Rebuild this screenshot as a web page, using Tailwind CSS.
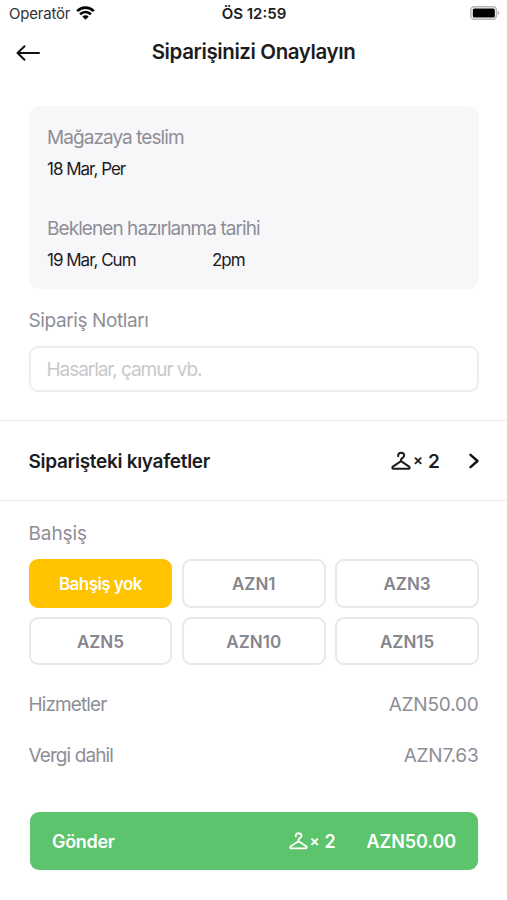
<!DOCTYPE html>
<html lang="tr">
<head>
<meta charset="utf-8">
<meta name="viewport" content="width=device-width, initial-scale=1">
<title>Siparişinizi Onaylayın</title>
<script src="https://cdn.jsdelivr.net/npm/@tailwindcss/browser@4"></script>
</head>
<body class="bg-white">
<svg class="hidden">
  <symbol id="hanger" viewBox="0 0 20 20">
    <path d="M7.2 5.2C6.8 3.2 8.2 1.8 10 1.8s3.2 1.2 3.2 2.8c0 2.2-3 2.2-3.2 4.2v1.2M10 10.2L1.9 15.6c-1 .8-.6 2.2.6 2.2h15c1.2 0 1.6-1.4.6-2.2L10 10.2" fill="none" stroke="currentColor" stroke-width="2" stroke-linecap="round" stroke-linejoin="round"/>
  </symbol>
</svg>
<div class="w-[507px] h-[900px] flex flex-col overflow-hidden bg-white font-['Inter',sans-serif] text-[#1c1c1e] whitespace-nowrap">
  <header class="h-[106px] shrink-0">
    <div class="h-7 grid grid-cols-3 items-center pl-[9px] pr-[7px]">
      <div class="flex items-center gap-[6px]">
        <span class="text-[15px] tracking-[-0.2px] text-[#333]">Operatör</span>
        <svg class="w-[19px] h-[14px] -mt-0.5" viewBox="0 0 19 14" fill="none" stroke="#000" stroke-width="2.7"><path d="M1.2 5.1a11.8 11.8 0 0 1 16.6 0M4.1 8.2a7.7 7.7 0 0 1 10.8 0"/><path d="M6.3 10.5a4.5 4.5 0 0 1 6.4 0L9.5 13.8Z" fill="#000" stroke="none"/></svg>
      </div>
      <span class="text-center text-[15px] font-semibold pr-[1px]">ÖS 12:59</span>
      <svg class="justify-self-end w-[30px] h-[14px] -mt-0.5" viewBox="0 0 30 14"><rect x=".8" y=".8" width="25.6" height="12.4" rx="3.4" fill="#fff" stroke="#b5b5b5" stroke-width="1.5"/><rect x="2.8" y="2.6" width="22" height="8.8" rx="1.5" fill="#000"/><path d="M27.8 4.8c2 .8 2 3.6 0 4.4Z" fill="#aaa"/></svg>
    </div>
    <div class="h-[50px] grid grid-cols-[80px_1fr_80px] items-center">
      <svg class="ml-[16px] w-[26px] h-[18px]" viewBox="0 0 26 18" fill="none" stroke="#111" stroke-width="2" stroke-linecap="round" stroke-linejoin="round"><path d="M23 9H2M8.5 2.2L1.5 9l7 6.8"/></svg>
      <h1 class="text-center text-[20.5px] font-semibold tracking-[-0.4px] -mt-[2px]">Siparişinizi Onaylayın</h1>
    </div>
  </header>
  <section class="mx-[28.5px] h-[183px] w-[450.5px] shrink-0 rounded-[11px] bg-[#f7f7fa] px-[18.5px] pt-[19px]">
    <p class="text-[19px] leading-[26px] tracking-[-0.93px] text-[#8e8e96]">Mağazaya teslim</p>
    <p class="mt-[6px] text-[17px] leading-6 tracking-[-1px]">18 Mar, Per</p>
    <p class="mt-[35px] text-[19px] leading-[26px] tracking-[-0.93px] text-[#8e8e96]">Beklenen hazırlanma tarihi</p>
    <div class="mt-[6px] flex text-[17px] leading-6 tracking-[-1px]"><span class="w-[165px]">19 Mar, Cum</span><span>2pm</span></div>
  </section>
  <section class="h-[131px] shrink-0 px-[28.5px] pt-[19px]">
    <p class="text-[19px] leading-[26px] tracking-[-0.4px] text-[#8e8e96]">Sipariş Notları</p>
    <div class="mt-[12px] w-[450.5px] h-[46px] rounded-[9px] border-2 border-[#ededee] flex items-center px-[16px] pt-[3px] text-[19px] tracking-[-1.05px] text-[#c8c8cb]">Hasarlar, çamur vb.</div>
  </section>
  <section class="h-[81px] shrink-0 border-y border-[#eeeeef] flex items-center pl-[28.5px] pr-[25px]">
    <h2 class="flex-1 text-[19px] font-semibold tracking-[-0.3px] pt-[3px]">Siparişteki kıyafetler</h2>
    <svg class="w-5 h-5 mr-px"><use href="#hanger"/></svg>
    <span class="ml-[1px] w-[13px] text-[15px] font-semibold">×</span>
    <span class="ml-[2px] text-[19px] font-semibold w-[13px] pt-[3px]">2</span>
    <svg class="ml-[26px] mr-px w-[14px] h-[16px]" viewBox="0 0 14 16" fill="none" stroke="#111" stroke-width="2.4" stroke-linecap="round" stroke-linejoin="round"><path d="M3.5 1.8L10.5 8l-7 6.2"/></svg>
  </section>
  <section class="h-[178px] shrink-0 px-[28.5px] pt-[20px]">
    <p class="text-[19px] leading-[26px] tracking-[-0.1px] text-[#8e8e96]">Bahşiş</p>
    <div class="mt-[12px] w-[450.5px] grid grid-cols-3 gap-x-[9.5px] gap-y-[9px] text-center text-[17px] font-semibold leading-[46px] text-[#85858d]">
      <div class="h-[48.5px] rounded-[9px] border-2 border-[#ffc300] bg-[#ffc300] text-white tracking-[-0.55px]">Bahşiş yok</div>
      <div class="h-[48.5px] rounded-[9px] border-2 border-[#e8e8ea]">AZN1</div>
      <div class="h-[48.5px] rounded-[9px] border-2 border-[#e8e8ea]">AZN3</div>
      <div class="h-[48.5px] rounded-[9px] border-2 border-[#e8e8ea]">AZN5</div>
      <div class="h-[48.5px] rounded-[9px] border-2 border-[#e8e8ea]">AZN10</div>
      <div class="h-[48.5px] rounded-[9px] border-2 border-[#e8e8ea]">AZN15</div>
    </div>
  </section>
  <section class="h-[133px] shrink-0 px-[28.5px] text-[19px] leading-[51px] tracking-[-0.2px] text-[#8e8e96]">
    <div class="flex justify-between"><span class="tracking-[-0.9px]">Hizmetler</span><span>AZN50.00</span></div>
    <div class="flex justify-between"><span class="tracking-[-0.9px]">Vergi dahil</span><span>AZN7.63</span></div>
  </section>
  <div class="mx-[30px] w-[448px] h-[58px] shrink-0 rounded-[9px] bg-[#5cc46c] text-white flex items-center pl-[22px] pr-[22px] font-semibold text-[18px]">
    <span class="flex-1 tracking-[-0.3px]">Gönder</span>
    <svg class="w-[19px] h-5"><use href="#hanger"/></svg>
    <span class="ml-[2px] w-[13px] text-[15px]">×</span>
    <span class="ml-[2px] w-[12px]">2</span>
    <span class="ml-[30px] tracking-[-0.1px]">AZN50.00</span>
  </div>
</div>
</body>
</html>
